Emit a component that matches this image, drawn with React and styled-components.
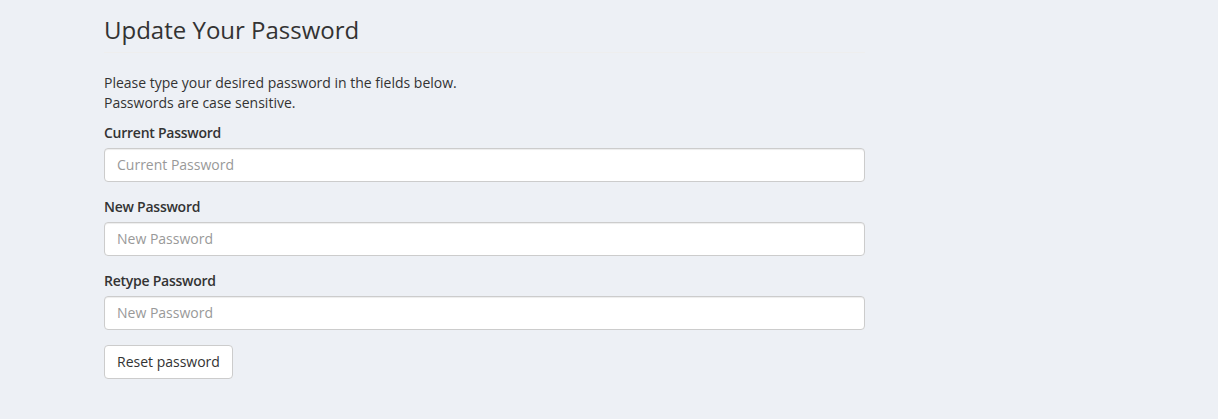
import React from 'react';
import styled, { createGlobalStyle } from 'styled-components';

const GlobalStyle = createGlobalStyle`
  html, body {
    margin: 0;
    padding: 0;
    background: #edf0f5;
  }
  body {
    font-family: "Open Sans", "Liberation Sans", sans-serif;
    font-size: 14px;
    line-height: 20px;
    color: #333;
  }
  * { box-sizing: border-box; }
`;

const Page = styled.div`
  min-height: 419px;
  background: #edf0f5;
  padding: 17px 0 0 104px;
`;

const Content = styled.div`
  width: 761px;
`;

const PageHeader = styled.div`
  padding-bottom: 9px;
  border-bottom: 1px solid #eee;
  margin-bottom: 20px;
`;

const Title = styled.h2`
  margin: 0;
  font-size: 24px;
  font-weight: 400;
  line-height: 26px;
  color: #333;
`;

const Intro = styled.p`
  margin: 0 0 10px;
`;

const FormGroup = styled.div`
  margin-bottom: 15px;
`;

const Label = styled.label`
  display: block;
  font-weight: 600;
  letter-spacing: -0.25px;
  margin-bottom: 5px;
`;

const Input = styled.input`
  display: block;
  width: 100%;
  height: 34px;
  padding: 5px 12px 7px;
  font-family: inherit;
  font-size: 14px;
  line-height: 20px;
  color: #555;
  background: #fff;
  border: 1px solid #ccc;
  border-radius: 4px;
  box-shadow: inset 0 1px 1px rgba(0, 0, 0, 0.075);
  outline: none;

  &::placeholder {
    color: #999;
  }
`;

const Button = styled.button`
  height: 34px;
  padding: 6px 12px;
  font-family: inherit;
  font-size: 14px;
  line-height: 20px;
  color: #333;
  background: #fff;
  border: 1px solid #ccc;
  border-radius: 4px;
  cursor: pointer;
`;

const fields = [
  { label: 'Current Password', placeholder: 'Current Password' },
  { label: 'New Password', placeholder: 'New Password' },
  { label: 'Retype Password', placeholder: 'New Password' },
];

export default function App() {
  return (
    <>
      <GlobalStyle />
      <Page>
        <Content>
          <PageHeader>
            <Title>Update Your Password</Title>
          </PageHeader>
          <Intro>
            Please type your desired password in the fields below.
            <br />
            Passwords are case sensitive.
          </Intro>
          {fields.map((f) => (
            <FormGroup key={f.label}>
              <Label>{f.label}</Label>
              <Input type="password" placeholder={f.placeholder} />
            </FormGroup>
          ))}
          <Button type="button">Reset password</Button>
        </Content>
      </Page>
    </>
  );
}
